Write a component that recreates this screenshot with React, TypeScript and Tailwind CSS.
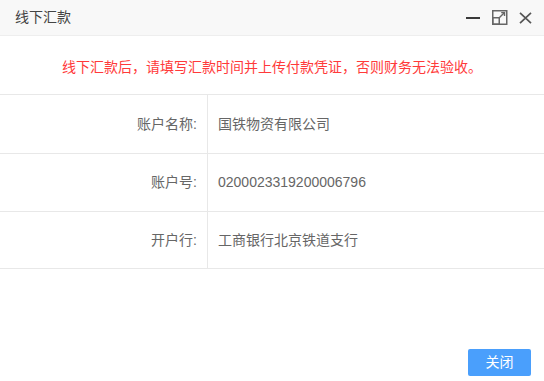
import React from "react";

function Row({ label, value, h }: { label: string; value: string; h: string }) {
  return (
    <div className={`flex border-b border-[#e8e8e8] ${h}`}>
      <div className="w-[208px] border-r border-[#e8e8e8] flex items-center justify-end pr-[10px] text-[#666666]">
        {label}
      </div>
      <div className="flex-1 flex items-center pl-[10px] text-[#666666]">{value}</div>
    </div>
  );
}

export default function App() {
  return (
    <div className="w-[544px] h-[381px] bg-white flex flex-col font-['Liberation_Sans','Noto_Sans_CJK_SC',sans-serif] text-[14px] overflow-hidden">
      <div className="h-[36px] shrink-0 bg-[#f8f8f8] border-b border-[#eeeeee] flex items-center pl-[15px] pr-[12px]">
        <span className="text-[#444444] flex-1">线下汇款</span>
        <div className="flex items-center gap-[11px]">
          <svg width="15" height="14" viewBox="0 0 15 14">
            <rect x="0" y="6" width="14" height="2" fill="#3a3a3a" />
          </svg>
          <svg width="16" height="15" viewBox="0 0 16 15" fill="none">
            <rect x="0.75" y="0.75" width="14" height="13.5" stroke="#666" strokeWidth="1.5" />
            <rect x="0.75" y="7.75" width="6.5" height="6.5" stroke="#666" strokeWidth="1.5" />
            <path d="M7.5 7.5 L12.5 2.5" stroke="#666" strokeWidth="1.4" />
            <path d="M9.2 2.6 H12.5 V5.9" stroke="#666" strokeWidth="1.4" />
          </svg>
          <svg width="13" height="12" viewBox="0 0 13 12" fill="none">
            <path d="M1 0.8 L12 11.2 M12 0.8 L1 11.2" stroke="#555" strokeWidth="1.7" />
          </svg>
        </div>
      </div>
      <div className="h-[58px] shrink-0 flex items-center justify-center pt-[4px] text-[#ff3a3a]">
        线下汇款后，请填写汇款时间并上传付款凭证，否则财务无法验收。
      </div>
      <div className="border-t border-[#e8e8e8]">
        <Row label="账户名称:" value="国铁物资有限公司" h="h-[59px]" />
        <Row label="账户号:" value="0200023319200006796" h="h-[58px]" />
        <Row label="开户行:" value="工商银行北京铁道支行" h="h-[57px]" />
      </div>
      <div className="flex-1 flex items-end justify-end pr-[13px] pb-[5px]">
        <button className="w-[63px] h-[27px] rounded-[2px] bg-[#4a9ffc] text-white text-[14px] flex items-center justify-center">
          关闭
        </button>
      </div>
    </div>
  );
}
